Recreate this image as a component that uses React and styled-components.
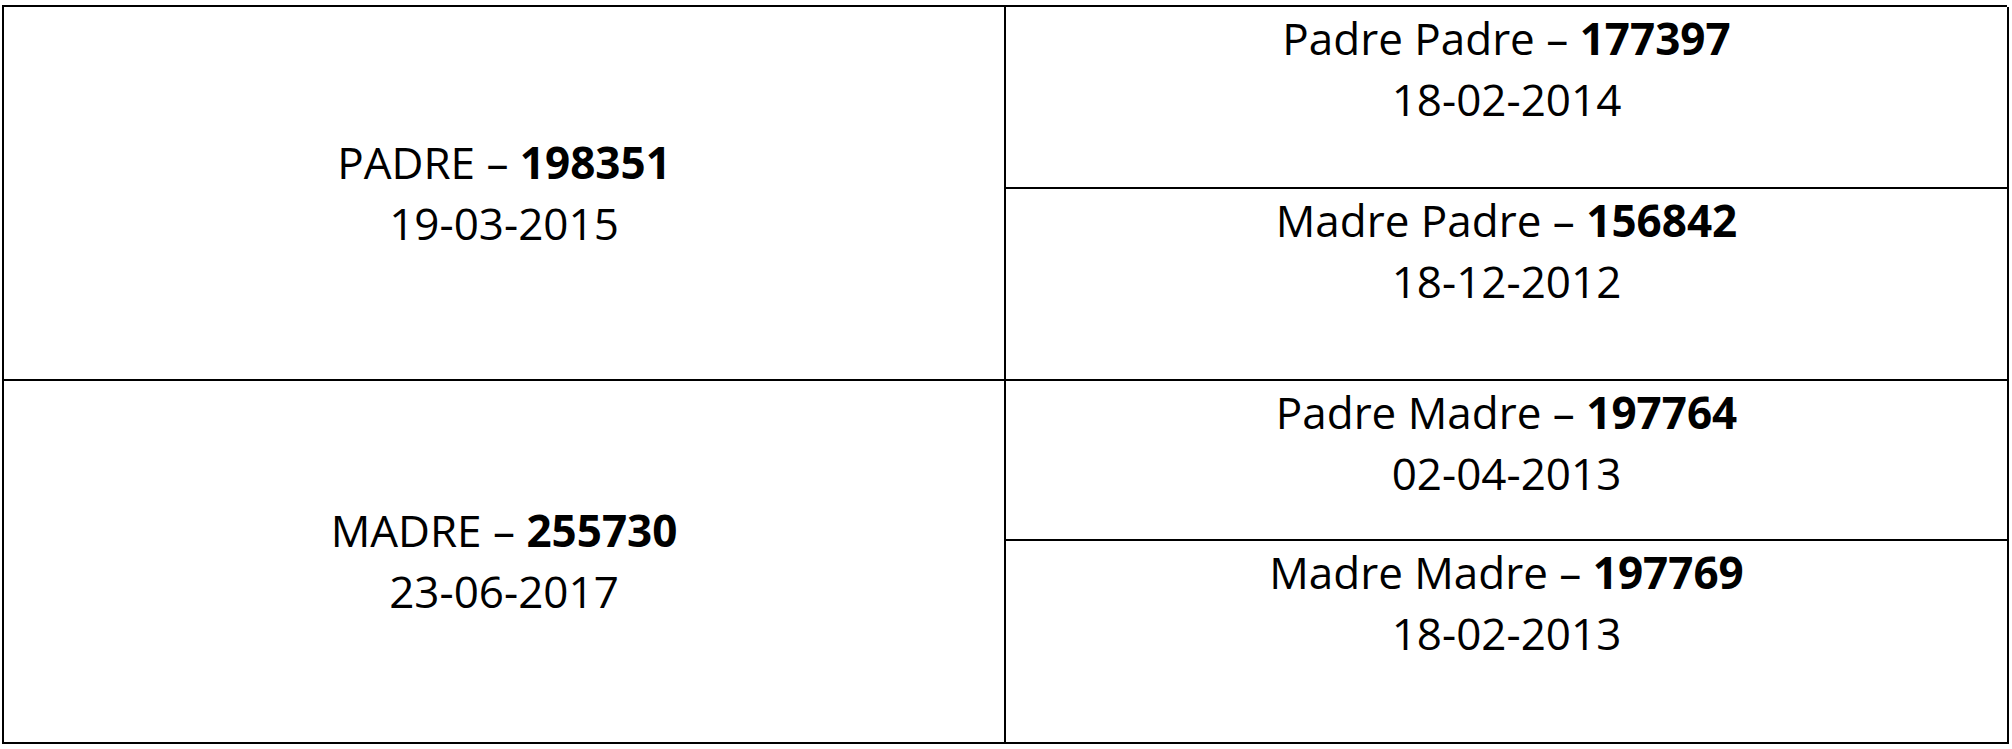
import { Fragment } from "react";
import styled, { createGlobalStyle } from "styled-components";

const GlobalStyle = createGlobalStyle`
  html, body {
    margin: 0;
    padding: 0;
    background: #ffffff;
  }
  * {
    box-sizing: border-box;
  }
`;

const Page = styled.div`
  padding: 5px 0 0 2px;
  font-family: "Open Sans", "Liberation Sans", sans-serif;
  color: #000000;
`;

const Pedigree = styled.div`
  display: grid;
  width: 2005px;
  grid-template-columns: 1002px 1003px;
  grid-template-rows: 182px 192px 160px 203px;
  border-top: 2px solid #000000;
  border-left: 2px solid #000000;
`;

const Cell = styled.div`
  border-right: 2px solid #000000;
  border-bottom: 2px solid #000000;
  display: flex;
  flex-direction: column;
  align-items: center;
  justify-content: ${(p) => (p.$parent ? "center" : "flex-start")};
  padding: ${(p) => (p.$parent ? "0 0 1px" : "1px 0 0")};
  grid-column: ${(p) => (p.$parent ? 1 : 2)};
  grid-row: ${(p) => (p.$parent ? "span 2" : "auto")};
  font-size: 44px;
  line-height: 61px;
  text-align: center;
`;

const Line = styled.div`
  white-space: nowrap;
`;

const Code = styled.b`
  font-weight: 700;
`;

const parents = [
  { name: "PADRE", code: "198351", date: "19-03-2015" },
  { name: "MADRE", code: "255730", date: "23-06-2017" },
];

const grandparents = [
  [
    { name: "Padre Padre", code: "177397", date: "18-02-2014" },
    { name: "Madre Padre", code: "156842", date: "18-12-2012" },
  ],
  [
    { name: "Padre Madre", code: "197764", date: "02-04-2013" },
    { name: "Madre Madre", code: "197769", date: "18-02-2013" },
  ],
];

function Entry({ name, code, date }) {
  return (
    <>
      <Line>
        {name} – <Code>{code}</Code>
      </Line>
      <Line>{date}</Line>
    </>
  );
}

export default function App() {
  return (
    <Page>
      <GlobalStyle />
      <Pedigree>
        {parents.map((p, i) => (
          <Fragment key={p.code}>
            <Cell $parent>
              <Entry {...p} />
            </Cell>
            {grandparents[i].map((g) => (
              <Cell key={g.code}>
                <Entry {...g} />
              </Cell>
            ))}
          </Fragment>
        ))}
      </Pedigree>
    </Page>
  );
}
